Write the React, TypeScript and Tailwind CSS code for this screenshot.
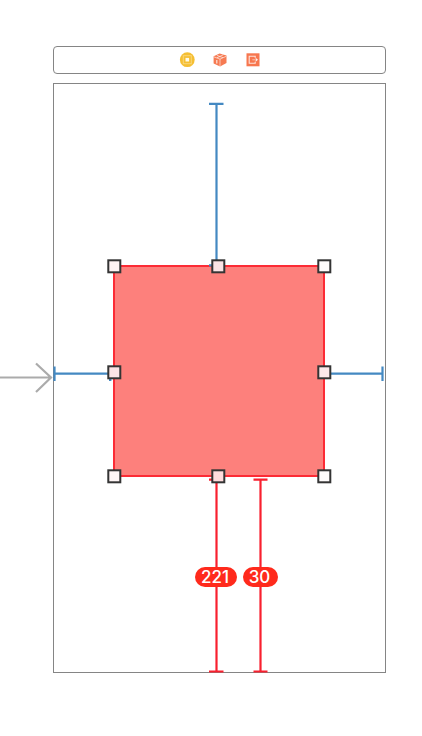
const BLUE = "#4489c2";
const RED = "#f8202f";

function ControllerIcon() {
  return (
    <svg width="16" height="16" viewBox="0 0 16 16" aria-hidden="true">
      <circle cx="8.3" cy="7.7" r="7.4" fill="#f5bf33" />
      <rect x="4.3" y="3.7" width="8" height="8" fill="none" stroke="#f9d67a" strokeWidth="1" />
      <rect x="6.5" y="5.9" width="3.6" height="3.6" fill="#fffbe8" />
    </svg>
  );
}

function ResponderIcon() {
  return (
    <svg width="16" height="16" viewBox="0 0 16 16" aria-hidden="true">
      <path d="M1.6 4.2 7.6 1.4l6.9 2.1v7.4l-6.4 3.7-6.5-3.2z" fill="#f67a52" />
      <path d="M2 4.9 8 7.1l6.2-2.8M8 7.1v7.2M4.8 3.3l6.2 2.4M11.3 2.8 4.9 5.8" fill="none" stroke="#fff" strokeOpacity="0.65" strokeWidth="0.9" />
      <path d="M4.8 8v3.6" stroke="#fff" strokeOpacity="0.8" strokeWidth="1.2" />
    </svg>
  );
}

function ExitIcon() {
  return (
    <svg width="16" height="16" viewBox="0 0 16 16" aria-hidden="true">
      <rect x="1.5" y="1.3" width="13" height="13" fill="#f7774f" />
      <path d="M10.2 5.8V4.3H4.2v7h6V9.8" fill="none" stroke="#fff" strokeOpacity="0.8" strokeWidth="1.1" />
      <path d="M7.3 7.8H10" stroke="#fff" strokeOpacity="0.5" strokeWidth="1" />
      <path d="M10.6 5.8 13 7.8l-2.4 2z" fill="#fff" fillOpacity="0.9" />
    </svg>
  );
}

const handles = [
  { x: 114, y: 266, fill: "#fff4f4" },
  { x: 218, y: 266, fill: "#fbe4e6" },
  { x: 324, y: 266, fill: "#fffcfc" },
  { x: 114, y: 372, fill: "#fbe4e6" },
  { x: 324, y: 372, fill: "#fbe9ea" },
  { x: 114, y: 476, fill: "#fff6f6" },
  { x: 218, y: 476, fill: "#ffdcdd" },
  { x: 324, y: 476, fill: "#fffcfc" },
];

function Constraints() {
  return (
    <svg className="block overflow-visible" width="331" height="588" viewBox="54 84 331 588" aria-hidden="true">
      <g stroke={BLUE} strokeWidth="2.2" fill="none">
        <path d="M216.5 104V266M209 103.8H223.5M209 265.5H223.5" />
        <path d="M54 373.7H110M54.5 366.5V381M110.3 366.5V381" />
        <path d="M324 373.7H382M382.5 366.5V381" />
      </g>
      <rect x="114" y="266" width="210" height="210" fill="#fd807c" stroke="#fc2b35" strokeWidth="2" />
      <path d="M209 265.5H213M110 377V381" stroke={BLUE} strokeWidth="2" />
      <path
        d="M216.5 480V671M209 479.7H223.5M209 671.5H223.5M260.5 480V671M253.5 479.7H267.5M253.5 671.5H267.5"
        stroke={RED}
        strokeWidth="2.2"
        fill="none"
      />
      {handles.map(({ x, y, fill }) => (
        <rect
          key={`${x}-${y}`}
          x={x - 5.7}
          y={y - 5.7}
          width="12"
          height="12"
          fill={fill}
          stroke="#343434"
          strokeWidth="2"
        />
      ))}
    </svg>
  );
}

function EntryArrow() {
  return (
    <svg className="w-[53px] shrink-0" height="32" viewBox="0 0 53 32" fill="none" stroke="#ababab" strokeWidth="2.2" aria-hidden="true">
      <path d="M0 15.5H51M36 1.5 51 15.5 36 30" />
    </svg>
  );
}

export default function App() {
  return (
    <main className="min-h-screen bg-white pt-[46px] pb-16 font-['Inter','Liberation_Sans',sans-serif]">
      <header className="mr-9 ml-[53px] flex h-7 items-center justify-center gap-[17px] rounded border border-[#858585]">
        <ControllerIcon />
        <ResponderIcon />
        <ExitIcon />
      </header>
      <div className="mt-[9px] mr-9 flex items-center">
        <EntryArrow />
        <section className="flex flex-1 justify-center border border-[#858585]">
          <div className="relative">
            <Constraints />
            <span className="absolute top-[483px] left-[141px] flex h-5 w-[42px] items-center justify-center rounded-full bg-[#ff2a1c] pr-0.5 text-[17px] leading-5 font-medium text-white">
              221
            </span>
            <span className="absolute top-[483px] left-[189px] flex h-5 w-[35px] items-center justify-center rounded-full bg-[#ff2a1c] pr-0.5 text-[17px] leading-5 font-medium text-white">
              30
            </span>
          </div>
        </section>
      </div>
    </main>
  );
}
